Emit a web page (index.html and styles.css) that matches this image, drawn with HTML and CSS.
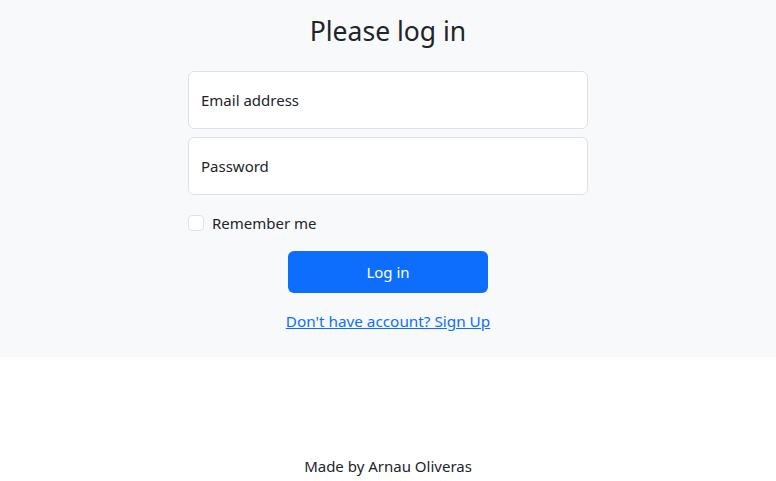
FILE: index.html
```html
<!DOCTYPE html>
<html lang="en">
<head>
<meta charset="utf-8">
<title>Log in</title>
<link rel="stylesheet" href="styles.css">
</head>
<body>
<main class="hero">
  <form class="login">
    <h1 class="title">Please log in</h1>
    <div class="field"><label class="field-label">Email address</label></div>
    <div class="field"><label class="field-label">Password</label></div>
    <label class="check"><span class="box"></span><span>Remember me</span></label>
    <button type="button" class="btn">Log in</button>
    <a class="link" href="#">Don't have account? Sign Up</a>
  </form>
</main>
<footer class="footer">Made by Arnau Oliveras</footer>
</body>
</html>
```
FILE: styles.css
```css
* { box-sizing: border-box; }
html, body { margin: 0; height: 100%; }
body {
  font-family: "Noto Sans", "Open Sans", sans-serif;
  font-size: 15px;
  line-height: 24px;
  color: #212529;
  background: #fff;
  display: flex;
  flex-direction: column;
  min-height: 100vh;
}
.hero {
  background: #f8f9fa;
  padding: 14px 0 24px;
}
.login {
  width: 400px;
  margin: 0 auto;
  display: flex;
  flex-direction: column;
}
.title {
  font-size: 26.5px;
  font-weight: 400;
  line-height: 34px;
  text-align: center;
  margin: 0 0 23px;
}
.field {
  height: 58px;
  background: #fff;
  border: 1px solid #dee2e6;
  border-radius: 6px;
  padding: 0 12px;
  display: flex;
  align-items: center;
  margin-bottom: 8px;
}
.field + .check { margin-top: 8px; }
.check {
  display: flex;
  align-items: center;
  gap: 8px;
  height: 24px;
  margin-bottom: 16px;
}
.box {
  width: 16px;
  height: 16px;
  border: 1px solid #dee2e6;
  border-radius: 4px;
  background: #fff;
}
.btn {
  align-self: center;
  width: 200px;
  height: 42px;
  border: 0;
  border-radius: 6px;
  background: #0d6efd;
  color: #fff;
  font: inherit;
  margin-bottom: 16px;
}
.link {
  align-self: center;
  color: #0d6efd;
  text-decoration: underline;
  font-size: 15.3px;
}
.footer {
  margin-top: auto;
  text-align: center;
  padding-bottom: 3px;
}
```
